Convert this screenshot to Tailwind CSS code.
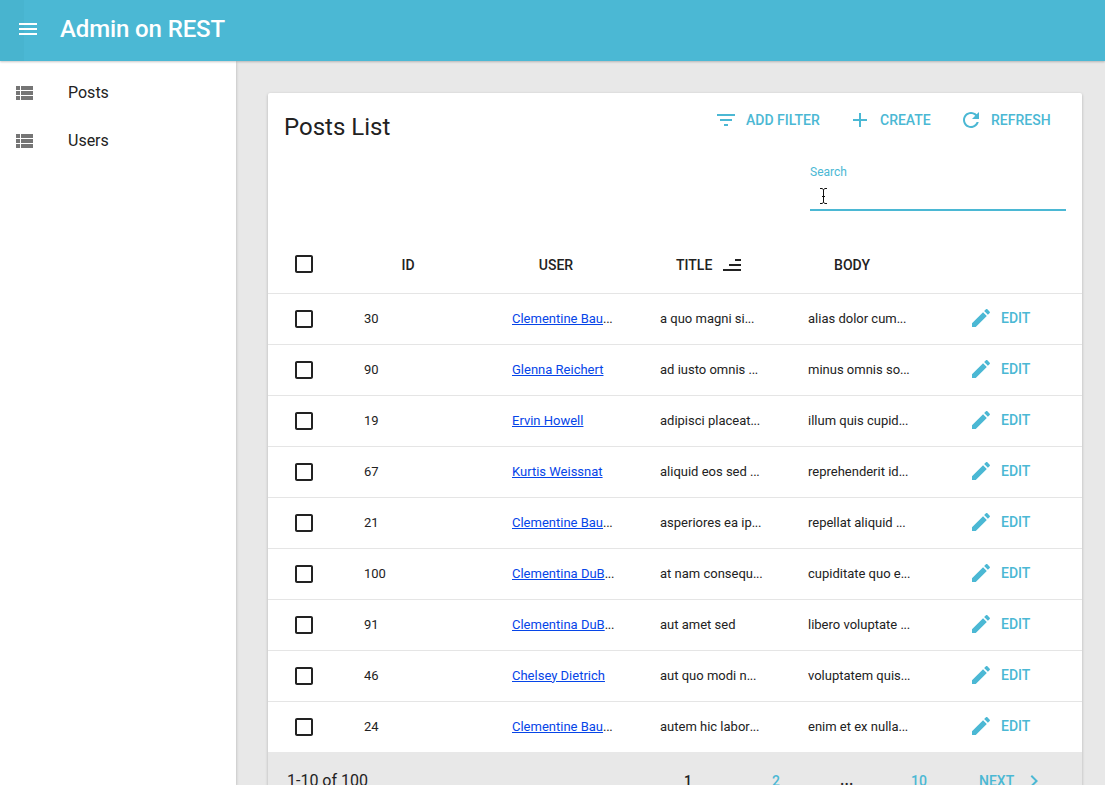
<!DOCTYPE html>
<html lang="en">
<head>
<meta charset="utf-8">
<title>Admin on REST</title>
<script src="https://cdn.jsdelivr.net/npm/@tailwindcss/browser@4"></script>
</head>
<body class="h-[785px] w-[1105px] overflow-hidden bg-[#e8e8e8] font-['Roboto',sans-serif] text-[#222]">
<svg class="hidden">
  <symbol id="list" viewBox="0 0 24 24"><path d="M4 5h4v4H4zM9 5h12v4H9zM4 10h4v4H4zM9 10h12v4H9zM4 15h4v4H4zM9 15h12v4H9z"/></symbol>
  <symbol id="box" viewBox="0 0 24 24"><path d="M19 5v14H5V5h14m0-2H5c-1.100 0-2 .9-2 2v14c0 1.100.9 2 2 2h14c1.100 0 2-.9 2-2V5c0-1.100-.9-2-2-2z"/></symbol>
  <symbol id="pencil" viewBox="0 0 24 24"><path d="M3 17.250V21h3.750L17.810 9.940l-3.750-3.750L3 17.250zM20.710 7.040c.39-.39.39-1.020 0-1.410l-2.340-2.340c-.39-.39-1.020-.39-1.410 0l-1.830 1.830 3.750 3.750 1.830-1.830z"/></symbol>
</svg>
<div class="flex h-full flex-col">
  <header class="relative z-10 flex h-[61px] shrink-0 items-center bg-[#4bb8d4] text-white shadow-[0_1px_2px_rgba(0,0,0,0.22)]">
    <div class="-mr-6 h-full w-6 bg-[#48b4cf]"></div>
    <svg class="relative mb-[3px] ml-4 size-6 shrink-0 fill-current" viewBox="0 0 24 24"><path d="M3 18h18v-2H3v2zm0-5h18v-2H3v2zm0-7v2h18V6H3z"/></svg>
    <h1 class="mb-[3px] ml-5 text-2xl font-medium tracking-[-0.12px]">Admin on REST</h1>
  </header>
  <div class="flex min-h-0 flex-1">
    <nav class="w-[236px] shrink-0 bg-white pt-[7px] shadow-[0_1px_3px_rgba(0,0,0,0.25)]">
      <a class="flex h-12 items-center pl-3"><svg class="mt-0.5 size-6 fill-[#757575]"><use href="#list"/></svg><span class="ml-8 pt-0.5 text-base">Posts</span></a>
      <a class="flex h-12 items-center pl-3"><svg class="mt-0.5 size-6 fill-[#757575]"><use href="#list"/></svg><span class="ml-8 pt-0.5 text-base">Users</span></a>
    </nav>
    <main class="pl-8 pt-8">
      <section class="w-[814px] rounded-t-[2px] bg-white shadow-[0_1px_3px_rgba(0,0,0,0.25)]">
        <div class="flex h-[61px] justify-between pl-4 pr-[31px]">
          <h2 class="pt-4 text-2xl leading-9">Posts List</h2>
          <div class="flex h-[54px] items-center text-sm font-medium text-[#4bb8d4]">
            <svg class="size-6 fill-current" viewBox="0 0 24 24"><path d="M10 18h4v-2h-4v2zM3 6v2h18V6H3zm3 7h12v-2H6v2z"/></svg><span class="ml-2 w-[102px]">ADD FILTER</span>
            <svg class="size-6 fill-current" viewBox="0 0 24 24"><path d="M19 13h-6v6h-2v-6H5v-2h6V5h2v6h6v2z"/></svg><span class="ml-2 w-[79px]">CREATE</span>
            <svg class="size-6 fill-current" viewBox="0 0 24 24"><path d="M17.650 6.350C16.200 4.900 14.210 4 12 4c-4.420 0-7.990 3.580-7.990 8s3.570 8 7.990 8c3.730 0 6.840-2.550 7.730-6h-2.080c-.82 2.330-3.040 4-5.650 4-3.310 0-6-2.690-6-6s2.690-6 6-6c1.660 0 3.140.69 4.220 1.780L13 11h7V4l-2.350 2.350z"/></svg><span class="-mr-px ml-2 w-[61px]">REFRESH</span>
          </div>
        </div>
        <div class="flex h-[85px] justify-end pr-4">
          <div class="h-[57px] w-64 border-b-2 border-[#4bb8d4] pt-[9px]">
            <label class="block text-xs leading-[18px] text-[#4bb8d4]">Search</label>
            <svg class="ml-[9px] mt-[7px] h-4 w-[9px]" viewBox="0 0 9 16" fill="none" stroke="#111"><path d="M1 .5h2l1.500 1L6 .5h2M4.500 1.500v13M3 8.500h3M1 15.500h2l1.500-1 1.500 1h2"/></svg>
          </div>
        </div>
        <div class="grid h-[55px] grid-cols-[96px_148px_148px_148px_148px_1fr] items-center border-b border-[#e5e5e5] pb-1 text-sm font-medium leading-6">
          <svg class="ml-6 size-6 fill-current"><use href="#box"/></svg>
          <span class="w-[88px] pt-px text-center">ID</span><span class="w-[88px] pt-px text-center">USER</span>
          <span class="flex items-center pl-4 pt-px">TITLE<svg class="ml-2 size-6 fill-current" viewBox="0 0 24 24"><path d="M3 16h18v2H3zM9 11h12v2H9zM15 6h6v2h-6z"/></svg></span>
          <span class="w-[88px] pt-px text-center">BODY</span>
        </div>
        <div id="rows"></div>
        <footer class="flex h-14 items-center bg-[#e8e8e8] pl-[19px] text-base">
          <span class="w-[397px] pt-px">1-10 of 100</span>
          <div class="flex h-[18px] items-start text-sm leading-5 font-medium text-[#4bb8d4]">
            <span class="w-[88px] text-[#222]">1</span><span class="w-[68px]">2</span><span class="-mt-px w-[71px] text-base leading-5 text-[#222]">...</span><span class="w-[68px]">10</span><span>NEXT</span>
            <svg class="-mt-0.5 ml-2 size-6 fill-current" viewBox="0 0 24 24"><path d="M10 6 8.590 7.410 13.170 12l-4.580 4.590L10 18l6-6z"/></svg>
          </div>
        </footer>
      </section>
    </main>
  </div>
</div>
<script>
const posts = [
  ['30','Clementine Bau','...','a quo magni si...','alias dolor cum...'],
  ['90','Glenna Reichert','','ad iusto omnis ...','minus omnis so...'],
  ['19','Ervin Howell','','adipisci placeat...','illum quis cupid...'],
  ['67','Kurtis Weissnat','','aliquid eos sed ...','reprehenderit id...'],
  ['21','Clementine Bau','...','asperiores ea ip...','repellat aliquid ...'],
  ['100','Clementina DuB','...','at nam consequ...','cupiditate quo e...'],
  ['91','Clementina DuB','...','aut amet sed','libero voluptate ...'],
  ['46','Chelsey Dietrich','','aut quo modi n...','voluptatem quis...'],
  ['24','Clementine Bau','...','autem hic labor...','enim et ex nulla...']
];
const dots = text => text.replace('...', '<span class="tracking-[-0.3px]">...</span>');
document.getElementById('rows').innerHTML = posts.map(([id, user, more, title, body]) => `
<div class="grid h-[51px] grid-cols-[96px_148px_148px_148px_148px_1fr] items-center whitespace-nowrap border-b border-[#e5e5e5] text-[13px] last:h-[50px] last:border-b-0">
  <svg class="ml-6 size-6 fill-current"><use href="#box"/></svg>
  <span class="pb-px">${id}</span>
  <span class="pb-px"><a class="text-[#0645e8] underline">${user}</a>${dots(more)}</span>
  <span class="pb-px">${dots(title)}</span>
  <span class="pb-px">${dots(body)}</span>
  <span class="flex items-center pb-0.5 pl-[13px] text-sm font-medium text-[#4bb8d4]"><svg class="size-6 fill-current"><use href="#pencil"/></svg><span class="ml-2">EDIT</span></span>
</div>`).join('');
</script>
</body>
</html>
